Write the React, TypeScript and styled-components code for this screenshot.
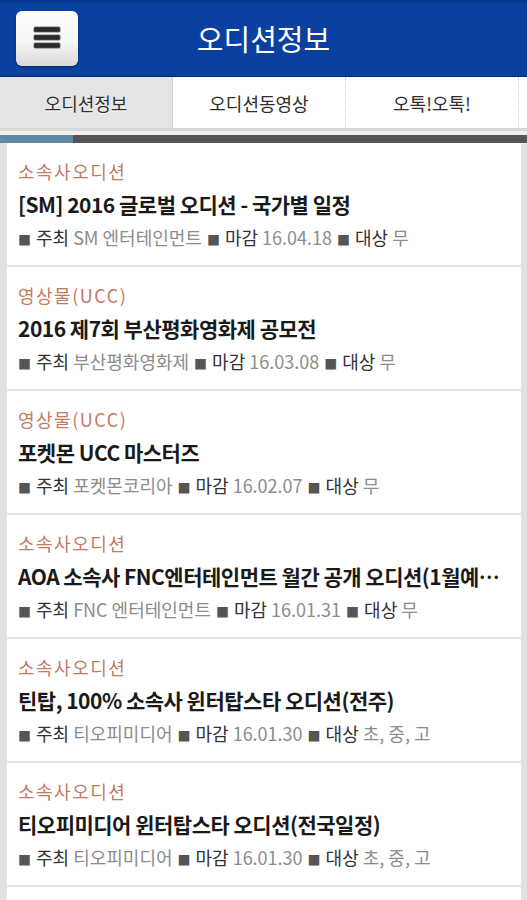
import * as React from 'react';
import styled, { createGlobalStyle } from 'styled-components';

const GlobalStyle = createGlobalStyle`
  body {
    margin: 0;
    background: #e2e2e2;
    font-family: "Noto Sans CJK KR", "Noto Sans", sans-serif;
  }
`;

type Audition = {
	category: string,
	title: string,
	host: string,
	deadline: string,
	target: string
};

const auditions: Audition[] = [
	{ category: '소속사오디션', title: '[SM] 2016 글로벌 오디션 - 국가별 일정', host: 'SM 엔터테인먼트', deadline: '16.04.18', target: '무' },
	{ category: '영상물(UCC)', title: '2016 제7회 부산평화영화제 공모전', host: '부산평화영화제', deadline: '16.03.08', target: '무' },
	{ category: '영상물(UCC)', title: '포켓몬 UCC 마스터즈', host: '포켓몬코리아', deadline: '16.02.07', target: '무' },
	{ category: '소속사오디션', title: 'AOA 소속사 FNC엔터테인먼트 월간 공개 오디션(1월예선일정)', host: 'FNC 엔터테인먼트', deadline: '16.01.31', target: '무' },
	{ category: '소속사오디션', title: '틴탑, 100% 소속사 윈터탑스타 오디션(전주)', host: '티오피미디어', deadline: '16.01.30', target: '초, 중, 고' },
	{ category: '소속사오디션', title: '티오피미디어 윈터탑스타 오디션(전국일정)', host: '티오피미디어', deadline: '16.01.30', target: '초, 중, 고' },
	{ category: '영상물(UCC)', title: '2016 청소년 UCC 공모전', host: '청소년문화재단', deadline: '16.01.25', target: '무' },
];

const tabs = ['오디션정보', '오디션동영상', '오톡!오톡!'];

const Header = styled.header`
  height: 76px;
  display: grid;
  grid-template-columns: 1fr auto 1fr;
  align-items: center;
  background: linear-gradient(#06348a 0px, #0a40a0 4px, #0a40a0 100%);
  border-bottom: 1px solid #05257a;
`;

const MenuButton = styled.button`
  justify-self: start;
  margin-left: 16px;
  width: 62px;
  height: 55px;
  border: none;
  border-radius: 6px;
  padding: 0;
  display: flex;
  align-items: center;
  justify-content: center;
  background: linear-gradient(#ffffff 0%, #f6f6f6 55%, #d9d9d9 100%);
  box-shadow: 0 1px 2px rgba(0, 0, 0, 0.4);
`;

const Title = styled.h1`
  margin: 0;
  color: #fff;
  font-size: 29px;
  font-weight: 400;
  line-height: 1;
`;

const TabBar = styled.nav`
  display: flex;
  height: 51px;
  background: #fff;
  border-bottom: 3px solid #d8d8d8;
`;

const Tab = styled.div<{ $active?: boolean }>`
  width: 172px;
  display: flex;
  align-items: center;
  justify-content: center;
  font-size: 18px;
  color: #2e2e2e;
  text-shadow: 0 1px 0 #fff;
  background: ${p => p.$active ? '#e5e5e5' : '#fff'};
  border-right: 1px dotted #c4c4c4;
`;

const Gap = styled.div`
  height: 4px;
  background: #f1f1f1;
`;

const Track = styled.div`
  height: 8px;
  background: #555;
`;

const Thumb = styled.div<{ $width: number }>`
  width: ${p => p.$width}px;
  height: 100%;
  background: #6289a3;
`;

const List = styled.main`
  display: flex;
  flex-direction: column;
  gap: 2px;
  padding: 0 6px 0 7px;
`;

const Card = styled.article`
  height: 122px;
  box-sizing: border-box;
  padding: 15px 8px 0 11px;
  background: #fff;
`;

const Category = styled.div`
  font-size: 18px;
  line-height: 26px;
  letter-spacing: 1.5px;
  color: #c27a64;
`;

const ItemTitle = styled.div`
  margin-top: 4px;
  font-size: 21px;
  line-height: 32px;
  font-weight: 700;
  letter-spacing: -0.5px;
  color: #1a1a1a;
  white-space: nowrap;
  overflow: hidden;
  text-overflow: ellipsis;
`;

const Meta = styled.div`
  margin-top: 3px;
  font-size: 18px;
  line-height: 28px;
  color: #8c8c8c;
  white-space: nowrap;
`;

const Bullet = styled.span`
  color: #555;
  font-size: 13px;
  margin-right: 5px;
`;

const Label = styled.span`
  color: #333;
  margin-right: 4px;
`;

const Field = styled.span`
  margin-right: 5px;
`;

function MenuIcon() {
	return <svg width="28" height="24" viewBox="0 0 28 24">
		{[1, 9, 17].map(y => (
			<rect key={y} x="1" y={y} width="26" height="5" rx="1" fill="#2a2a2a" stroke="#555" strokeWidth="0.8" />
		))}
	</svg>
}

function MetaField(props: { label: string, value: string }) {
	return <Field>
		<Bullet>■</Bullet>
		<Label>{props.label}</Label>
		{props.value}
	</Field>
}

function AuditionCard(props: { item: Audition }) {
	const item = props.item;
	return <Card>
		<Category>{item.category}</Category>
		<ItemTitle>{item.title}</ItemTitle>
		<Meta>
			<MetaField label="주최" value={item.host} />
			<MetaField label="마감" value={item.deadline} />
			<MetaField label="대상" value={item.target} />
		</Meta>
	</Card>
}

export default function App() {
	return <>
		<GlobalStyle />
		<Header>
			<MenuButton aria-label="menu"><MenuIcon /></MenuButton>
			<Title>오디션정보</Title>
		</Header>
		<TabBar>
			{tabs.map((t, i) => <Tab key={t} $active={i === 0}>{t}</Tab>)}
		</TabBar>
		<Gap />
		<Track><Thumb $width={73} /></Track>
		<List>
			{auditions.map((a, i) => <AuditionCard key={i} item={a} />)}
		</List>
	</>
}
